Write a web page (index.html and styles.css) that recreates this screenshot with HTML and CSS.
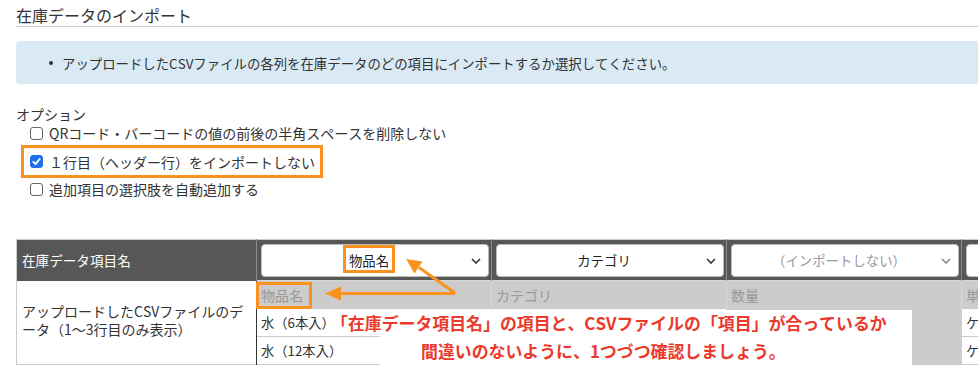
FILE: index.html
```html
<!DOCTYPE html>
<html lang="ja">
<head>
<meta charset="utf-8">
<title>在庫データのインポート</title>
<link rel="stylesheet" href="styles.css">
</head>
<body>
<div class="page">
  <h1 class="title">在庫データのインポート</h1>
  <div class="info"><span class="bullet"></span>アップロードしたCSVファイルの各列を在庫データのどの項目にインポートするか選択してください。</div>
  <div class="options">
    <div class="options-title">オプション</div>
    <label class="opt"><span class="cb"></span>QRコード・バーコードの値の前後の半角スペースを削除しない</label>
    <label class="opt opt-hl"><span class="cb cb-on"><svg viewBox="0 0 12 12" width="11" height="11"><polyline points="2.5,6.3 5,8.8 9.5,3.2" fill="none" stroke="#fff" stroke-width="2" stroke-linecap="round" stroke-linejoin="round"/></svg></span>１行目（ヘッダー行）をインポートしない</label>
    <label class="opt"><span class="cb"></span>追加項目の選択肢を自動追加する</label>
  </div>
  <table class="map">
    <colgroup>
      <col class="c-label"><col class="c-col"><col class="c-col"><col class="c-col"><col class="c-col">
    </colgroup>
    <tr class="head">
      <th class="label">在庫データ項目名</th>
      <th class="sel-cell"><div class="sel">物品名<svg class="chev" viewBox="0 0 10 6" width="10" height="6"><polyline points="1,1 5,5 9,1" fill="none" stroke="#333" stroke-width="1.6"/></svg></div></th>
      <th class="sel-cell"><div class="sel">カテゴリ<svg class="chev" viewBox="0 0 10 6" width="10" height="6"><polyline points="1,1 5,5 9,1" fill="none" stroke="#333" stroke-width="1.6"/></svg></div></th>
      <th class="sel-cell"><div class="sel sel-none">（インポートしない）<svg class="chev" viewBox="0 0 10 6" width="10" height="6"><polyline points="1,1 5,5 9,1" fill="none" stroke="#888" stroke-width="1.6"/></svg></div></th>
      <th class="sel-cell"><div class="sel">単位<svg class="chev" viewBox="0 0 10 6" width="10" height="6"><polyline points="1,1 5,5 9,1" fill="none" stroke="#333" stroke-width="1.6"/></svg></div></th>
    </tr>
    <tr class="csv-head">
      <td class="label-body" rowspan="3">アップロードしたCSVファイルのデータ（1〜3行目のみ表示）</td>
      <td class="g">物品名</td>
      <td class="g">カテゴリ</td>
      <td class="g">数量</td>
      <td class="g">単位</td>
    </tr>
    <tr class="data">
      <td class="first">水（6本入）</td>
      <td></td>
      <td class="g"></td>
      <td>ケース</td>
    </tr>
    <tr class="data">
      <td class="first">水（12本入）</td>
      <td></td>
      <td class="g"></td>
      <td>ケース</td>
    </tr>
  </table>

  <div class="note-bg"></div>
  <p class="note"><span class="l1">「在庫データ項目名」の項目と、CSVファイルの「項目」が合っているか</span><span class="l2">間違いのないように、1つづつ確認しましょう。</span></p>
  <div class="hl hl-sel"></div>
  <div class="hl hl-cell"></div>
  <svg class="arrows" width="978" height="374" viewBox="0 0 978 374">
    <line x1="455" y1="293" x2="419" y2="267.5" stroke="#f7931e" stroke-width="3"/>
    <polygon points="406,259 422.5,261.5 414.5,273.5" fill="#f7931e"/>
    <line x1="455" y1="293.5" x2="339" y2="293.5" stroke="#f7931e" stroke-width="3"/>
    <polygon points="325,293.5 341,286.5 341,300.5" fill="#f7931e"/>
  </svg>
</div>
</body>
</html>
```

FILE: styles.css
```css
html, body {
  margin: 0;
  padding: 0;
  overflow: hidden;
  background: #fff;
}

body {
  width: 978px;
  height: 374px;
  font-family: "Noto Sans CJK JP", "Noto Sans", sans-serif;
  font-size: 13px;
  font-kerning: none;
  color: #333;
}

.page {
  position: relative;
  height: 374px;
  padding-left: 16px;
}

.title {
  margin: 0;
  padding-top: 4px;
  font-size: 16px;
  font-weight: normal;
  line-height: 22px;
  color: #333;
  border-bottom: 1px solid #cfcfcf;
}

.info {
  margin-top: 14px;
  width: 1000px;
  height: 43px;
  display: flex;
  align-items: center;
  padding-left: 33px;
  background: #d9eaf5;
  border-radius: 4px 0 0 4px;
  box-sizing: border-box;
  font-size: 13.4px;
}

.bullet {
  width: 4px;
  height: 4px;
  border-radius: 50%;
  background: #333;
  margin-right: 9px;
}

.options {
  margin-top: 21px;
  font-size: 14px;
}

.options-title {
  line-height: 18px;
}

.opt {
  display: flex;
  align-items: center;
  height: 20px;
  padding-left: 14px;
}

.opt-hl {
  width: fit-content;
  height: 27px;
  margin: 2px 0 1px 5px;
  padding: 0 5px 0 6px;
  border: 3px solid #f7931e;
}

.cb {
  width: 13px;
  height: 13px;
  box-sizing: border-box;
  border: 1px solid #666;
  border-radius: 3px;
  background: #fff;
  margin-right: 6px;
  display: flex;
  align-items: center;
  justify-content: center;
}

.cb-on {
  background: #1f6fec;
  border-color: #1f6fec;
}

.map {
  margin-top: 40px;
  width: 1180px;
  table-layout: fixed;
  border-collapse: collapse;
  border: 1px solid #ccc;
  font-size: 14px;
}

.c-label { width: 240px; }
.c-col { width: 235px; }

.head { height: 41px; }
.csv-head, .data { height: 28px; }

.map th, .map td {
  padding: 0;
  font-weight: normal;
  text-align: left;
  white-space: nowrap;
  overflow: hidden;
}

.label {
  background: #575757;
  color: #fff;
  font-size: 13.6px;
  padding-left: 5px !important;
}

.sel-cell {
  background: #575757;
  padding: 3px 2px 3px 4px !important;
  border-left: 1px solid #8a8a8a;
}

.sel {
  position: relative;
  height: 33px;
  box-sizing: border-box;
  background: #fff;
  border: 1px solid #bdbdbd;
  border-radius: 4px;
  display: flex;
  align-items: center;
  justify-content: center;
  padding-right: 12px;
  font-size: 13.4px;
  color: #222;
}

.sel-none {
  color: #999;
}

.chev {
  position: absolute;
  right: 7px;
  top: 13px;
}

.label-body {
  background: #fff;
  white-space: normal !important;
  line-height: 18px;
  padding: 0 6px 4px 5px !important;
  border-right: 1px solid #333;
  vertical-align: middle;
}

.g {
  background: #ccc;
  color: #999;
  padding-left: 4px !important;
  border-left: 1px solid #dadada;
  border-top: 1px solid #d6d6d6;
}

.data td {
  border-top: 1px solid #ccc;
  border-left: 1px solid #ccc;
  padding-left: 4px;
  font-size: 13.3px;
}

.data td.first {
  border-left: 1px solid #333;
}

.note-bg {
  position: absolute;
  left: 380px;
  top: 310px;
  width: 532px;
  height: 64px;
  background: #fff;
}

.note {
  position: absolute;
  left: 331px;
  top: 309px;
  margin: 0;
  font-size: 16.9px;
  font-weight: bold;
  line-height: 28px;
  color: #eb3a2c;
  white-space: nowrap;
}

.note span {
  display: block;
}

.note .l2 {
  padding-left: 90px;
}

.hl {
  position: absolute;
  box-sizing: border-box;
  border: 3px solid #f7931e;
}

.hl-sel {
  left: 343px;
  top: 245px;
  width: 52px;
  height: 28px;
}

.hl-cell {
  left: 256px;
  top: 282px;
  width: 56px;
  height: 27px;
}

.arrows {
  position: absolute;
  left: 0;
  top: 0;
  pointer-events: none;
}
```
